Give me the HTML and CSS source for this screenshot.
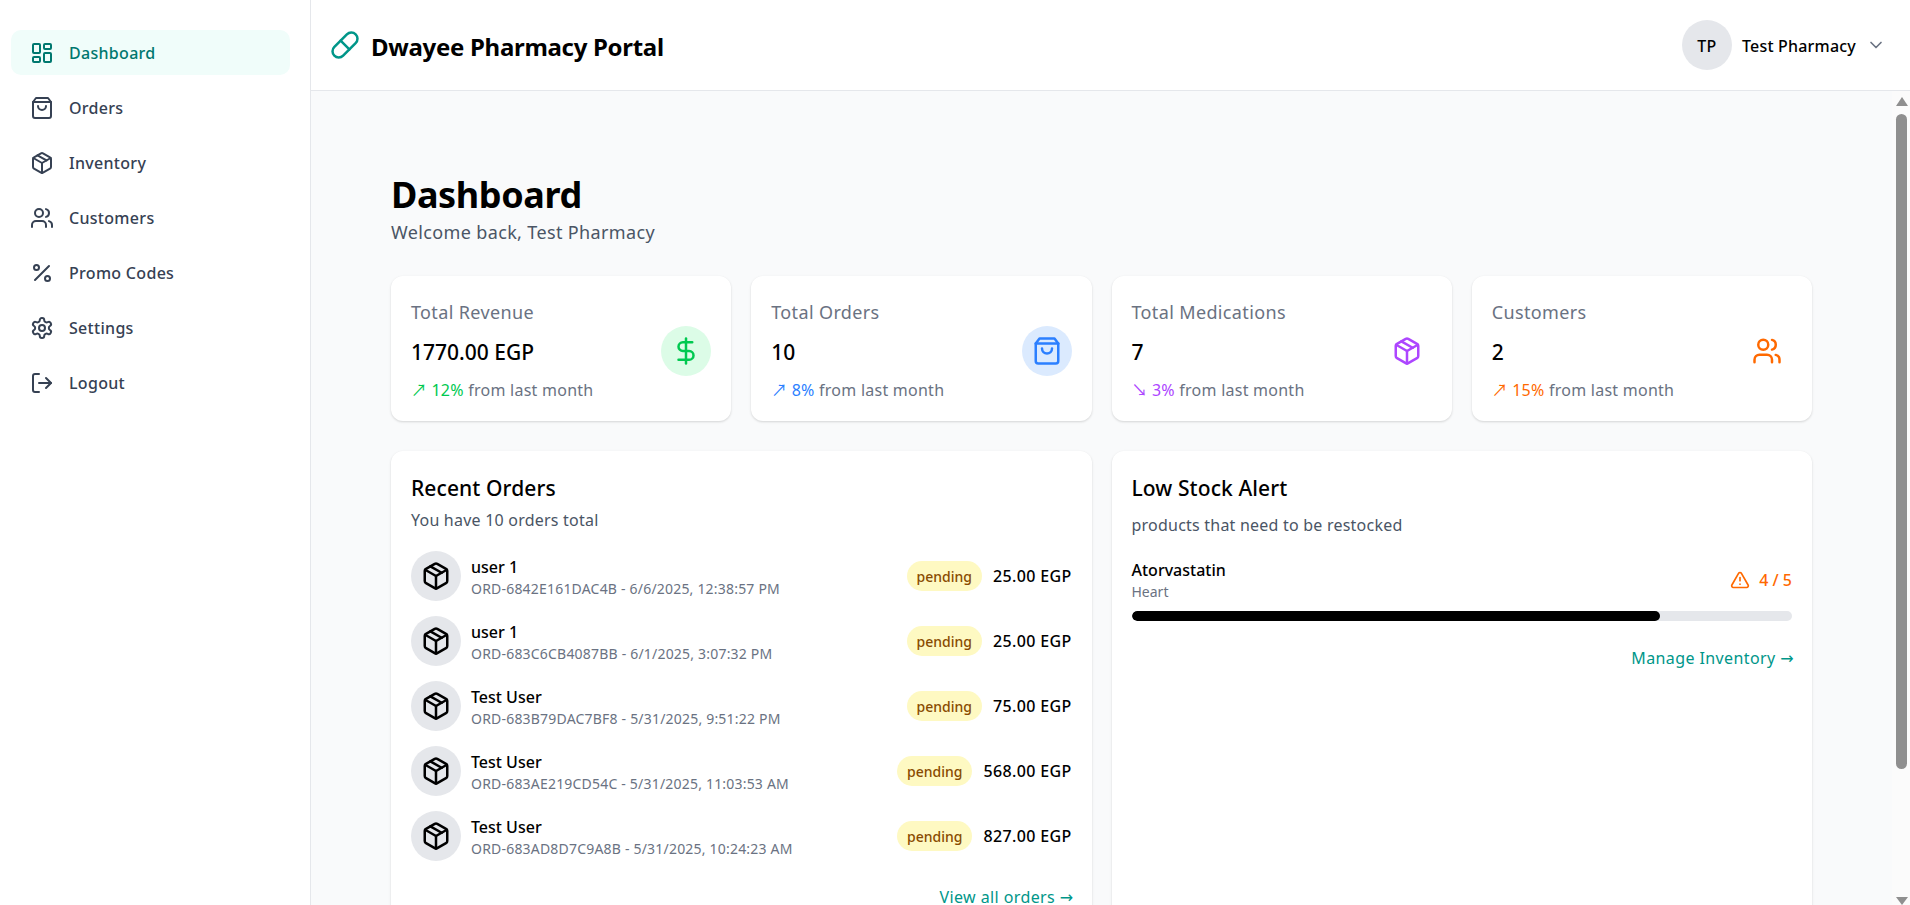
FILE: index.html
```html
<!DOCTYPE html>
<html lang="en">
<head>
  <meta charset="UTF-8">
  <meta name="viewport" content="width=device-width, initial-scale=1.0">
  <title>Dwayee Pharmacy Portal</title>
  <link rel="stylesheet" href="styles.css">
</head>
<body>
  <!-- Icon sprite -->
  <svg class="sprite" width="0" height="0" aria-hidden="true">
    <symbol id="i-dashboard" viewBox="0 0 24 24"><rect x="3" y="3" width="7" height="9" rx="1"/><rect x="14" y="3" width="7" height="5" rx="1"/><rect x="14" y="12" width="7" height="9" rx="1"/><rect x="3" y="16" width="7" height="5" rx="1"/></symbol>
    <symbol id="i-bag" viewBox="0 0 24 24"><path d="M6 2 3 6v14a2 2 0 0 0 2 2h14a2 2 0 0 0 2-2V6l-3-4Z"/><path d="M3 6h18"/><path d="M16 10a4 4 0 0 1-8 0"/></symbol>
    <symbol id="i-package" viewBox="0 0 24 24"><path d="m7.5 4.27 9 5.15"/><path d="M21 8a2 2 0 0 0-1-1.73l-7-4a2 2 0 0 0-2 0l-7 4A2 2 0 0 0 3 8v8a2 2 0 0 0 1 1.73l7 4a2 2 0 0 0 2 0l7-4A2 2 0 0 0 21 16Z"/><path d="m3.3 7 8.7 5 8.7-5"/><path d="M12 22V12"/></symbol>
    <symbol id="i-users" viewBox="0 0 24 24"><path d="M16 21v-2a4 4 0 0 0-4-4H6a4 4 0 0 0-4 4v2"/><circle cx="9" cy="7" r="4"/><path d="M22 21v-2a4 4 0 0 0-3-3.87"/><path d="M16 3.13a4 4 0 0 1 0 7.75"/></symbol>
    <symbol id="i-percent" viewBox="0 0 24 24"><line x1="19" y1="5" x2="5" y2="19"/><circle cx="6.5" cy="6.5" r="2.5"/><circle cx="17.5" cy="17.5" r="2.5"/></symbol>
    <symbol id="i-settings" viewBox="0 0 24 24"><path d="M12.22 2h-.44a2 2 0 0 0-2 2v.18a2 2 0 0 1-1 1.73l-.43.25a2 2 0 0 1-2 0l-.15-.08a2 2 0 0 0-2.73.73l-.22.38a2 2 0 0 0 .73 2.73l.15.1a2 2 0 0 1 1 1.72v.51a2 2 0 0 1-1 1.74l-.15.09a2 2 0 0 0-.73 2.73l.22.38a2 2 0 0 0 2.73.73l.15-.08a2 2 0 0 1 2 0l.43.25a2 2 0 0 1 1 1.73V20a2 2 0 0 0 2 2h.44a2 2 0 0 0 2-2v-.18a2 2 0 0 1 1-1.73l.43-.25a2 2 0 0 1 2 0l.15.08a2 2 0 0 0 2.73-.73l.22-.39a2 2 0 0 0-.73-2.73l-.15-.08a2 2 0 0 1-1-1.74v-.5a2 2 0 0 1 1-1.74l.15-.09a2 2 0 0 0 .73-2.73l-.22-.38a2 2 0 0 0-2.73-.73l-.15.08a2 2 0 0 1-2 0l-.43-.25a2 2 0 0 1-1-1.73V4a2 2 0 0 0-2-2z"/><circle cx="12" cy="12" r="3"/></symbol>
    <symbol id="i-logout" viewBox="0 0 24 24"><path d="M9 21H5a2 2 0 0 1-2-2V5a2 2 0 0 1 2-2h4"/><polyline points="16 17 21 12 16 7"/><line x1="21" y1="12" x2="9" y2="12"/></symbol>
    <symbol id="i-pill" viewBox="0 0 24 24"><path d="m10.5 20.5 10-10a4.95 4.95 0 1 0-7-7l-10 10a4.95 4.95 0 1 0 7 7Z"/><path d="m8.5 8.5 7 7"/></symbol>
    <symbol id="i-dollar" viewBox="0 0 24 24"><line x1="12" y1="2" x2="12" y2="22"/><path d="M17 5H9.5a3.5 3.5 0 0 0 0 7h5a3.5 3.5 0 0 1 0 7H6"/></symbol>
    <symbol id="i-alert" viewBox="0 0 24 24"><path d="m21.73 18-8-14a2 2 0 0 0-3.48 0l-8 14A2 2 0 0 0 4 21h16a2 2 0 0 0 1.73-3"/><path d="M12 9v4"/><path d="M12 17h.01"/></symbol>
    <symbol id="i-chevron" viewBox="0 0 24 24"><path d="m6 9 6 6 6-6"/></symbol>
  </svg>

  <!-- Sidebar -->
  <aside class="sidebar">
    <a class="nav-item active"><svg class="icon"><use href="#i-dashboard"/></svg><span>Dashboard</span></a>
    <a class="nav-item"><svg class="icon"><use href="#i-bag"/></svg><span>Orders</span></a>
    <a class="nav-item"><svg class="icon"><use href="#i-package"/></svg><span>Inventory</span></a>
    <a class="nav-item"><svg class="icon"><use href="#i-users"/></svg><span>Customers</span></a>
    <a class="nav-item"><svg class="icon"><use href="#i-percent"/></svg><span>Promo Codes</span></a>
    <a class="nav-item"><svg class="icon"><use href="#i-settings"/></svg><span>Settings</span></a>
    <a class="nav-item"><svg class="icon"><use href="#i-logout"/></svg><span>Logout</span></a>
  </aside>

  <div class="page">
    <!-- Top bar -->
    <header class="topbar">
      <div class="brand">
        <svg class="icon icon-30 teal"><use href="#i-pill"/></svg>
        <span class="brand-name">Dwayee Pharmacy Portal</span>
      </div>
      <div class="account">
        <div class="avatar">TP</div>
        <span class="account-name">Test Pharmacy</span>
        <svg class="icon icon-20 chevron"><use href="#i-chevron"/></svg>
      </div>
    </header>

    <div class="scroll-area">
      <main class="content">
        <h1>Dashboard</h1>
        <p class="welcome">Welcome back, Test Pharmacy</p>

        <!-- Stat cards -->
        <section class="stats">
          <div class="card stat">
            <div>
              <div class="stat-title">Total Revenue</div>
              <div class="stat-value">1770.00 EGP</div>
              <div class="stat-note"><span class="green"><span class="arrow">↗</span> 12%</span> from last month</div>
            </div>
            <div class="stat-icon bg-green green"><svg class="icon icon-30"><use href="#i-dollar"/></svg></div>
          </div>
          <div class="card stat">
            <div>
              <div class="stat-title">Total Orders</div>
              <div class="stat-value">10</div>
              <div class="stat-note"><span class="blue"><span class="arrow">↗</span> 8%</span> from last month</div>
            </div>
            <div class="stat-icon bg-blue blue"><svg class="icon icon-30"><use href="#i-bag"/></svg></div>
          </div>
          <div class="card stat">
            <div>
              <div class="stat-title">Total Medications</div>
              <div class="stat-value">7</div>
              <div class="stat-note"><span class="purple"><span class="arrow">↘</span> 3%</span> from last month</div>
            </div>
            <div class="stat-icon purple"><svg class="icon icon-30"><use href="#i-package"/></svg></div>
          </div>
          <div class="card stat">
            <div>
              <div class="stat-title">Customers</div>
              <div class="stat-value">2</div>
              <div class="stat-note"><span class="orange"><span class="arrow">↗</span> 15%</span> from last month</div>
            </div>
            <div class="stat-icon orange"><svg class="icon icon-30"><use href="#i-users"/></svg></div>
          </div>
        </section>

        <section class="panels">
          <!-- Recent orders -->
          <div class="card panel">
            <h2>Recent Orders</h2>
            <p class="panel-sub">You have 10 orders total</p>
            <div class="orders">
              <div class="order">
                <div class="order-icon"><svg class="icon icon-30"><use href="#i-package"/></svg></div>
                <div class="order-info">
                  <div class="order-name">user 1</div>
                  <div class="order-meta">ORD-6842E161DAC4B - 6/6/2025, 12:38:57 PM</div>
                </div>
                <span class="badge">pending</span>
                <span class="order-total">25.00 EGP</span>
              </div>
              <div class="order">
                <div class="order-icon"><svg class="icon icon-30"><use href="#i-package"/></svg></div>
                <div class="order-info">
                  <div class="order-name">user 1</div>
                  <div class="order-meta">ORD-683C6CB4087BB - 6/1/2025, 3:07:32 PM</div>
                </div>
                <span class="badge">pending</span>
                <span class="order-total">25.00 EGP</span>
              </div>
              <div class="order">
                <div class="order-icon"><svg class="icon icon-30"><use href="#i-package"/></svg></div>
                <div class="order-info">
                  <div class="order-name">Test User</div>
                  <div class="order-meta">ORD-683B79DAC7BF8 - 5/31/2025, 9:51:22 PM</div>
                </div>
                <span class="badge">pending</span>
                <span class="order-total">75.00 EGP</span>
              </div>
              <div class="order">
                <div class="order-icon"><svg class="icon icon-30"><use href="#i-package"/></svg></div>
                <div class="order-info">
                  <div class="order-name">Test User</div>
                  <div class="order-meta">ORD-683AE219CD54C - 5/31/2025, 11:03:53 AM</div>
                </div>
                <span class="badge">pending</span>
                <span class="order-total">568.00 EGP</span>
              </div>
              <div class="order">
                <div class="order-icon"><svg class="icon icon-30"><use href="#i-package"/></svg></div>
                <div class="order-info">
                  <div class="order-name">Test User</div>
                  <div class="order-meta">ORD-683AD8D7C9A8B - 5/31/2025, 10:24:23 AM</div>
                </div>
                <span class="badge">pending</span>
                <span class="order-total">827.00 EGP</span>
              </div>
            </div>
            <a class="panel-link orders-link">View all orders →</a>
          </div>

          <!-- Low stock -->
          <div class="card panel">
            <h2>Low Stock Alert</h2>
            <p class="panel-sub stock-sub">products that need to be restocked</p>
            <div class="stock-row">
              <div>
                <div class="order-name">Atorvastatin</div>
                <div class="stock-cat">Heart</div>
              </div>
              <div class="stock-count">
                <svg class="icon icon-20"><use href="#i-alert"/></svg>
                <span>4 / 5</span>
              </div>
            </div>
            <div class="progress"><div class="progress-fill" style="width: 80%"></div></div>
            <a class="panel-link stock-link">Manage Inventory →</a>
          </div>
        </section>
      </main>

      <!-- Browser scrollbar -->
      <div class="scrollbar">
        <div class="arrow-up"></div>
        <div class="thumb"></div>
        <div class="arrow-down"></div>
      </div>
    </div>
  </div>
</body>
</html>
```

FILE: styles.css
```css
* {
  box-sizing: border-box;
}

body {
  margin: 0;
  height: 100vh;
  display: flex;
  overflow: hidden;
  font-family: "Noto Sans", "DejaVu Sans", sans-serif;
  font-size: 16px;
  letter-spacing: 0.3px;
  color: #000;
  background-color: #f9fafb;
}

.sprite {
  position: absolute;
}

.icon {
  width: 24px;
  height: 24px;
  flex: none;
  fill: none;
  stroke: currentColor;
  stroke-width: 2;
  stroke-linecap: round;
  stroke-linejoin: round;
}

.icon-30 {
  width: 30px;
  height: 30px;
}

.icon-20 {
  width: 20px;
  height: 20px;
}

.teal { color: #009689; }
.green { color: #00c950; }
.blue { color: #2b7fff; }
.purple { color: #ad46ff; }
.orange { color: #ff6900; }
.bg-green { background-color: #dcfce7; }
.bg-blue { background-color: #dbeafe; }

/* Sidebar */
.sidebar {
  width: 311px;
  flex: none;
  padding: 30px 20px 0 11px;
  display: flex;
  flex-direction: column;
  gap: 10px;
  background-color: #fff;
  border-right: 1px solid #e5e7eb;
}

.nav-item {
  height: 45px;
  padding: 0 19px;
  display: flex;
  align-items: center;
  gap: 15px;
  border-radius: 10px;
  font-weight: 500;
  color: #364153;
}

.nav-item span {
  padding-top: 1px;
}

.nav-item.active {
  background-color: #f0fdfa;
  color: #00786f;
}

/* Top bar */
.page {
  flex: 1;
  min-width: 0;
  display: flex;
  flex-direction: column;
}

.topbar {
  height: 91px;
  flex: none;
  padding: 0 24px 0 19px;
  display: flex;
  align-items: center;
  justify-content: space-between;
  background-color: #fff;
  border-bottom: 1px solid #e5e7eb;
}

.brand {
  display: flex;
  align-items: center;
  gap: 11px;
}

.brand-name {
  padding-top: 2px;
  font-size: 24px;
  font-weight: 700;
  letter-spacing: -0.3px;
}

.account {
  display: flex;
  align-items: center;
}

.avatar {
  width: 50px;
  height: 50px;
  margin-right: 10px;
  padding-top: 1px;
  display: flex;
  align-items: center;
  justify-content: center;
  border-radius: 50%;
  background-color: #e5e7eb;
  font-weight: 500;
}

.account-name {
  margin-right: 10px;
  padding-top: 1px;
  font-weight: 500;
  letter-spacing: 0.2px;
}

.chevron {
  color: #6a7282;
}

/* Main area */
.scroll-area {
  flex: 1;
  min-height: 0;
  display: flex;
}

.content {
  flex: 1;
  min-width: 0;
  padding: 82px 80px 0;
  overflow: hidden;
}

h1 {
  margin: 0;
  font-size: 36px;
  line-height: 44px;
  font-weight: 700;
  letter-spacing: -0.4px;
}

.welcome {
  margin: 0 0 29px;
  font-size: 18px;
  line-height: 30px;
  letter-spacing: 0.36px;
  color: #4a5565;
}

.card {
  background-color: #fff;
  border-radius: 12px;
  box-shadow: 0 1px 3px rgba(0, 0, 0, 0.1), 0 1px 2px rgba(0, 0, 0, 0.06);
}

.stats {
  display: grid;
  grid-template-columns: repeat(4, 1fr);
  gap: 20px;
  margin-bottom: 30px;
}

.stat {
  height: 145px;
  padding: 24px 20px 19px;
  display: flex;
  align-items: center;
  justify-content: space-between;
}

.stat-title {
  font-size: 18px;
  line-height: 24px;
  letter-spacing: 0.36px;
  color: #6a7282;
}

.stat-value {
  margin: 14px 0 12px;
  font-size: 21px;
  line-height: 28px;
  font-weight: 500;
  letter-spacing: 0;
}

.stat-note {
  line-height: 24px;
  letter-spacing: 0.25px;
  color: #6a7282;
}

.arrow {
  font-family: "Noto Sans CJK JP", sans-serif;
  line-height: 1;
  letter-spacing: 0;
}

.stat-icon {
  width: 50px;
  height: 50px;
  display: flex;
  align-items: center;
  justify-content: center;
  border-radius: 50%;
}

.panels {
  display: grid;
  grid-template-columns: repeat(2, 1fr);
  gap: 20px;
}

.panel {
  padding: 22px 20px 20px;
}

h2 {
  margin: 0;
  font-size: 21px;
  line-height: 31px;
  font-weight: 500;
  letter-spacing: 0.1px;
}

.panel-sub {
  margin: 4px 0 0;
  line-height: 24px;
  letter-spacing: 0.22px;
  color: #4a5565;
}

.stock-sub {
  margin-top: 9px;
}

.orders {
  margin-top: 19px;
  display: flex;
  flex-direction: column;
  gap: 15px;
}

.order {
  height: 50px;
  display: flex;
  align-items: center;
}

.order-icon {
  width: 50px;
  height: 50px;
  margin-right: 10px;
  display: flex;
  align-items: center;
  justify-content: center;
  border-radius: 50%;
  background-color: #e5e7eb;
}

.order-info {
  flex: 1;
  min-width: 0;
  padding-top: 2px;
}

.order-name {
  line-height: 24px;
  font-weight: 500;
  letter-spacing: 0;
}

.order-meta {
  font-size: 14px;
  line-height: 20px;
  letter-spacing: 0.2px;
  color: #6a7282;
}

.badge {
  height: 30px;
  margin-right: 11px;
  padding: 0 10px;
  display: flex;
  align-items: center;
  border-radius: 15px;
  background-color: #fef9c2;
  color: #894b00;
  font-size: 14px;
  font-weight: 500;
  letter-spacing: 0;
}

.order-total {
  font-weight: 500;
  letter-spacing: 0.35px;
}

.panel-link {
  display: block;
  margin-right: -2px;
  line-height: 24px;
  text-align: right;
  letter-spacing: 0.4px;
  color: #009689;
}

.orders-link {
  margin-top: 28px;
  line-height: 16px;
}

.stock-row {
  margin-top: 21px;
  display: flex;
  align-items: center;
  justify-content: space-between;
}

.stock-cat {
  font-size: 14px;
  line-height: 20px;
  letter-spacing: 0;
  color: #6a7282;
}

.stock-count {
  display: flex;
  align-items: center;
  gap: 9px;
  font-size: 16px;
  font-weight: 500;
  letter-spacing: 0;
  color: #ff6900;
}

.progress {
  height: 10px;
  margin-top: 9px;
  border-radius: 5px;
  background-color: #e5e7eb;
  overflow: hidden;
}

.progress-fill {
  height: 100%;
  border-radius: 5px;
  background-color: #000;
}

.stock-link {
  margin-top: 25px;
}

/* Scrollbar */
.scrollbar {
  width: 18px;
  flex: none;
  padding: 6px 2px 0 3px;
  display: flex;
  flex-direction: column;
  align-items: center;
  background-color: #fbfbfb;
}

.arrow-up,
.arrow-down {
  width: 0;
  height: 0;
  flex: none;
  border-left: 6.5px solid transparent;
  border-right: 6.5px solid transparent;
}

.arrow-up {
  border-bottom: 9px solid #8f8f8f;
}

.arrow-down {
  margin-top: 128px;
  border-top: 8px solid #8f8f8f;
}

.thumb {
  width: 11px;
  height: 655px;
  flex: none;
  margin-top: 8px;
  border-radius: 6px;
  background-color: #8f8f8f;
}
```
